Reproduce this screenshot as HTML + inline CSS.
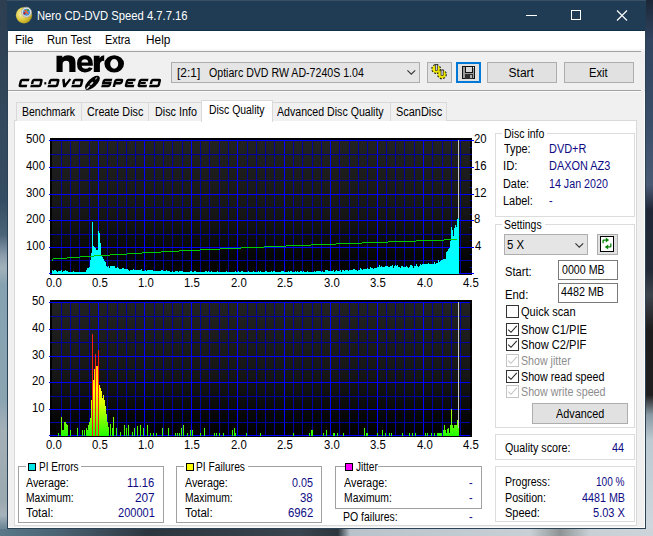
<!DOCTYPE html>
<html><head><meta charset="utf-8">
<style>
html,body{margin:0;padding:0}
*{box-sizing:border-box}
body{width:653px;height:536px;overflow:hidden;position:relative;font-family:"Liberation Sans",sans-serif;
background:linear-gradient(180deg,#27384a 0%,#3d5566 25%,#6f8c9c 45%,#8ea5b1 70%,#9fb2bc 88%,#2a3440 100%)}
.a{position:absolute}
.t{position:absolute;white-space:pre;line-height:1;transform-origin:0 0}
</style></head><body>
<div class="a" style="left:0;top:0;width:7px;height:536px;background:linear-gradient(180deg,#2c3e50 0px,#33485c 120px,#354d62 200px,#4c6478 235px,#8a9cac 255px,#a2b2bc 268px,#86a2b0 285px,#8aa4b2 400px,#a4b0b8 430px,#9aa8b0 500px,#a8b4bc 515px,#7890a0 525px,#5a7888 536px)"></div>
<div class="a" style="left:646px;top:0;width:7px;height:536px;background:linear-gradient(180deg,#1c2838 0px,#30435f 40px,#394d69 120px,#4a5a74 185px,#1f2636 210px,#232a36 270px,#3e444c 295px,#1e1c1c 330px,#201e1e 395px,#8a9aa4 415px,#bccad2 440px,#d0d8de 536px)"></div>
<div class="a" style="left:0;top:529px;width:653px;height:7px;background:linear-gradient(90deg,#5a7888 0px,#4a6272 60px,#2d353e 150px,#3a444e 300px,#2c343c 338px,#b9c2ca 350px,#c8d0d6 530px,#8e9494 560px,#c8d0d6 590px,#cdd4da 653px)"></div>
<div class="a" style="left:7px;top:0px;width:639px;height:529px;background:#f0f0f0"></div>
<div class="a" style="left:7px;top:0px;width:639px;height:30px;background:#203c55;border-top:1px solid #3a5064"></div>
<div class="a" style="left:8px;top:30px;width:637px;height:1px;background:#10304a"></div>
<div class="a" style="left:8px;top:31px;width:637px;height:18px;background:#fff"></div>
<div class="a" style="left:8px;top:49px;width:637px;height:2px;background:#f7f7f7"></div>
<div class="a" style="left:8px;top:51px;width:633px;height:1px;background:#a0a0a0"></div>
<div class="a" style="left:8px;top:90px;width:633px;height:1px;background:#a0a0a0"></div>
<div class="a" style="left:8px;top:91px;width:633px;height:1px;background:#fbfbfb"></div>
<div class="a" style="left:7px;top:30px;width:1px;height:499px;background:#2b4256"></div>
<div class="a" style="left:645px;top:30px;width:1px;height:499px;background:#2b4256"></div>
<div class="a" style="left:7px;top:528px;width:639px;height:1px;background:#2b4256"></div>
<div class="a" style="left:8px;top:527px;width:637px;height:1px;background:#fbfbfb"></div>
<div class="a" style="left:644px;top:92px;width:1px;height:436px;background:#fbfbfb"></div>
<svg class="a" style="left:15px;top:6px" width="18" height="18" viewBox="0 0 18 18">
   <defs><radialGradient id="dg" cx="0.35" cy="0.4" r="0.75"><stop offset="0" stop-color="#f6f0b0"/><stop offset="0.55" stop-color="#dcc63a"/><stop offset="1" stop-color="#a48c10"/></radialGradient></defs>
   <circle cx="9" cy="9.3" r="8.1" fill="url(#dg)"/>
   <circle cx="11.5" cy="6.2" r="5" fill="#e6e6e6" stroke="#a0a0a0" stroke-width="0.8"/>
   <circle cx="11.5" cy="6.2" r="3.5" fill="#3d8fd6"/>
   <path d="M9.5 3.8 L13.2 8 M12.8 3.6 L10.2 7.2" stroke="#f06030" stroke-width="1.2"/>
   <circle cx="9.4" cy="7.4" r="1.1" fill="#b01818"/><circle cx="13" cy="4" r="0.9" fill="#30a030"/>
  </svg>
<div class="a" style="left:526px;top:15px;width:11px;height:1px;background:#fff"></div>
<div class="a" style="left:571px;top:10px;width:10px;height:10px;border:1px solid #fff"></div>
<svg class="a" style="left:616px;top:10px" width="12" height="11" viewBox="0 0 12 11"><path d="M1 0.5 L11 10.5 M11 0.5 L1 10.5" stroke="#fff" stroke-width="1.1"/></svg>
<svg class="a" style="left:0;top:0" width="653" height="100" viewBox="0 0 653 100"><g fill="none" stroke="#000" stroke-width="2.5" stroke-linecap="butt"><path transform="translate(18.3,79) translate(0,8) skewX(-14) translate(0,-8)" d="M9.2,1.1 H2.1 Q1.1,1.1 1.1,2.1 V5.9 Q1.1,6.9 2.1,6.9 H8.399999999999999"/><path transform="translate(30.2,79) translate(0,8) skewX(-14) translate(0,-8)" d="M1.1,5.0 V2.0 Q1.1,1.1 2.0,1.1 H8.700000000000001 Q9.700000000000001,1.1 9.700000000000001,2.1 V5.9 Q9.700000000000001,6.9 8.700000000000001,6.9 H0"/><path transform="translate(47.5,79) translate(0,8) skewX(-14) translate(0,-8)" d="M1.1,5.0 V2.0 Q1.1,1.1 2.0,1.1 H8.200000000000001 Q9.200000000000001,1.1 9.200000000000001,2.1 V5.9 Q9.200000000000001,6.9 8.200000000000001,6.9 H0"/><path transform="translate(60.4,79) translate(0,8) skewX(-14) translate(0,-8)" d="M1.0,0 L3.6,6.9 H4.300000000000001 L7.9,0"/><path transform="translate(71.3,79) translate(0,8) skewX(-14) translate(0,-8)" d="M1.1,5.0 V2.0 Q1.1,1.1 2.0,1.1 H8.200000000000001 Q9.200000000000001,1.1 9.200000000000001,2.1 V5.9 Q9.200000000000001,6.9 8.200000000000001,6.9 H0"/><path transform="translate(101.2,79) translate(0,8) skewX(-14) translate(0,-8)" d="M9.1,1.1 H2.0 Q1.1,1.1 1.1,2.0 V4.0 H8.0 V6.0 Q8.0,6.9 7.1,6.9 H0"/><path transform="translate(112.7,79) translate(0,8) skewX(-14) translate(0,-8)" d="M1.1,8 V2.0 Q1.1,1.1 2.0,1.1 H6.800000000000001 Q7.700000000000001,1.1 7.700000000000001,2.0 V3.3000000000000003 Q7.700000000000001,4.2 6.800000000000001,4.2 H2.1"/><path transform="translate(124.5,79) translate(0,8) skewX(-14) translate(0,-8)" d="M9.3,1.1 H2.0 Q1.1,1.1 1.1,2.0 V6.0 Q1.1,6.9 2.0,6.9 H9.3"/><path transform="translate(137.3,79) translate(0,8) skewX(-14) translate(0,-8)" d="M9.2,1.1 H2.0 Q1.1,1.1 1.1,2.0 V6.0 Q1.1,6.9 2.0,6.9 H9.2"/><path transform="translate(149,79) translate(0,8) skewX(-14) translate(0,-8)" d="M1.1,5.0 V2.0 Q1.1,1.1 2.0,1.1 H8.200000000000001 Q9.200000000000001,1.1 9.200000000000001,2.1 V5.9 Q9.200000000000001,6.9 8.200000000000001,6.9 H0"/></g><g fill="none" stroke="#000" stroke-width="1.8"><path transform="translate(124.5,79) translate(0,8) skewX(-14) translate(0,-8)" d="M2.1,4.0 H7.500000000000001"/><path transform="translate(137.3,79) translate(0,8) skewX(-14) translate(0,-8)" d="M2.1,4.0 H7.3999999999999995"/></g><rect x="44.3" y="82.2" width="2" height="2.2" fill="#000"/><g transform="translate(92.4,82.8) rotate(-43)"><ellipse cx="0" cy="0" rx="9.4" ry="4.3" fill="#000"/><path d="M-8.2,0.4 L-4,0.2" stroke="#e8e8e8" stroke-width="1.3"/><path d="M-3,0.1 L0.8,-0.1" stroke="#d8d8d8" stroke-width="1.8"/><path d="M4.5,-0.6 L7.2,-0.8" stroke="#a0a0a0" stroke-width="1.2"/></g><g fill="#000" fill-rule="evenodd"><path d="M56.5,72 V55.8 H62.3 V57.6 Q64.3,55.3 68.2,55.3 Q75.5,55.3 75.5,62.2 V72 H69.3 V64 Q69.3,60.7 66.1,60.7 Q62.6,60.7 62.6,64.3 V72 Z"/><path d="M92.8,65.8 H81.6 Q82.2,68.7 85.6,68.7 Q88,68.7 89.1,67.2 L92.6,68.3 Q90.6,72.4 85,72.4 Q77,72.4 77,63.8 Q77,55.3 85,55.3 Q92.8,55.3 92.8,63.8 Z M81.4,62.4 H88.3 Q87.9,59.3 84.9,59.3 Q81.9,59.3 81.4,62.4 Z"/><path d="M93.8,72 V55.8 H99.6 V57.9 Q101.2,55.3 104.2,55.3 V60.7 Q99.9,60.7 99.9,64.6 V72 Z"/><path d="M104.4,63.85 A9.8,8.55 0 1,0 124,63.85 A9.8,8.55 0 1,0 104.4,63.85 Z M110.2,63.85 A4,4.9 0 1,0 118.2,63.85 A4,4.9 0 1,0 110.2,63.85 Z"/></g></svg>
<div class="a" style="left:171px;top:62px;width:249px;height:21px;background:#e5e5e5;border:1px solid #adadad"></div>
<svg class="a" style="left:406.5px;top:70.3px" width="9" height="5" viewBox="0 0 9 5"><path d="M0.4 0.4 L4.3 4.2 L8.2 0.4" fill="none" stroke="#333" stroke-width="1.1"/></svg>
<div class="a" style="left:427px;top:62px;width:25px;height:21px;background:#e1e1e1;border:1px solid #adadad"></div>
<svg class="a" style="left:0;top:0" width="653" height="100" viewBox="0 0 653 100">
  <g stroke="#000" stroke-width="1.1" fill="#f2ea00">
   <circle cx="436.2" cy="69" r="3.6" stroke-dasharray="1.6 1.2" stroke-width="2.6"/>
   <circle cx="436.2" cy="69" r="3.4" stroke="none"/>
   <circle cx="441.9" cy="74.3" r="3.6" stroke-dasharray="1.6 1.2" stroke-width="2.6"/>
   <circle cx="441.9" cy="74.3" r="3.4" stroke="none"/>
  </g>
  <g fill="#f2ea00"><circle cx="436.2" cy="69" r="4.3" opacity="0.55"/><circle cx="441.9" cy="74.3" r="4.3" opacity="0.55"/></g>
  <rect x="435.3" y="64.5" width="2.2" height="6" fill="#c8c8d8" stroke="#111" stroke-width="0.6"/>
  <rect x="441" y="70" width="2.2" height="5.5" fill="#c8c8d8" stroke="#111" stroke-width="0.6"/>
 </svg>
<div class="a" style="left:456px;top:62px;width:25px;height:21px;background:#e1e1e1;border:2px solid #0078d7"></div>
<svg class="a" style="left:0;top:0" width="653" height="100" viewBox="0 0 653 100" shape-rendering="crispEdges">
  <rect x="462" y="66" width="13" height="13" fill="#111"/>
  <rect x="463" y="67" width="11" height="11" fill="#9c9c9c"/>
  <rect x="465" y="66" width="8" height="7" fill="#111"/>
  <rect x="466" y="67" width="6" height="5" fill="#d6d6d6"/>
  <rect x="465" y="74" width="8" height="5" fill="#2e2e2e"/>
  <rect x="470" y="75" width="2" height="3" fill="#b0b0b0"/>
  <rect x="473" y="67" width="1" height="1" fill="#fff"/>
 </svg>
<div class="a" style="left:487px;top:62px;width:70px;height:21px;background:#e1e1e1;border:1px solid #adadad"></div>
<div class="a" style="left:564px;top:62px;width:70px;height:21px;background:#e1e1e1;border:1px solid #adadad"></div>
<div class="a" style="left:14px;top:120px;width:623px;height:406px;background:#fff;border:1px solid #d9d9d9"></div>
<div class="a" style="left:16px;top:102px;width:66px;height:19px;background:#f0f0f0;border:1px solid #d9d9d9;border-bottom:none"></div>
<div class="a" style="left:81px;top:102px;width:68px;height:19px;background:#f0f0f0;border:1px solid #d9d9d9;border-bottom:none"></div>
<div class="a" style="left:148px;top:102px;width:54px;height:19px;background:#f0f0f0;border:1px solid #d9d9d9;border-bottom:none"></div>
<div class="a" style="left:272px;top:102px;width:119px;height:19px;background:#f0f0f0;border:1px solid #d9d9d9;border-bottom:none"></div>
<div class="a" style="left:390px;top:102px;width:57px;height:19px;background:#f0f0f0;border:1px solid #d9d9d9;border-bottom:none"></div>
<div class="a" style="left:201px;top:100px;width:72px;height:22px;background:#fff;border:1px solid #d9d9d9;border-bottom:none"></div>
<svg class="a" style="left:0;top:0" width="653" height="536" viewBox="0 0 653 536"><defs><linearGradient id="bg" x1="0" y1="0" x2="0" y2="1"><stop offset="0" stop-color="#222222"/><stop offset="0.55" stop-color="#161616"/><stop offset="1" stop-color="#000000"/></linearGradient><linearGradient id="hot" gradientUnits="userSpaceOnUse" x1="0" y1="436" x2="0" y2="334"><stop offset="0" stop-color="#20ff00"/><stop offset="0.16" stop-color="#80ff00"/><stop offset="0.31" stop-color="#d0ff00"/><stop offset="0.45" stop-color="#ffff00"/><stop offset="0.69" stop-color="#ffc000"/><stop offset="0.82" stop-color="#ff7000"/><stop offset="1" stop-color="#ff1000"/></linearGradient></defs>
<g shape-rendering="crispEdges">
<rect x="50" y="138" width="422" height="137" fill="#000"/>
<rect x="52" y="140" width="418" height="133" fill="url(#bg)"/>
<rect x="61" y="140" width="1" height="134" fill="#0000a0"/>
<rect x="70" y="140" width="1" height="134" fill="#0000a0"/>
<rect x="79" y="140" width="1" height="134" fill="#0000a0"/>
<rect x="89" y="140" width="1" height="134" fill="#0000a0"/>
<rect x="98" y="140" width="1" height="134" fill="#0000ff"/>
<rect x="107" y="140" width="1" height="134" fill="#0000a0"/>
<rect x="117" y="140" width="1" height="134" fill="#0000a0"/>
<rect x="126" y="140" width="1" height="134" fill="#0000a0"/>
<rect x="135" y="140" width="1" height="134" fill="#0000a0"/>
<rect x="144" y="140" width="1" height="134" fill="#0000ff"/>
<rect x="154" y="140" width="1" height="134" fill="#0000a0"/>
<rect x="163" y="140" width="1" height="134" fill="#0000a0"/>
<rect x="172" y="140" width="1" height="134" fill="#0000a0"/>
<rect x="182" y="140" width="1" height="134" fill="#0000a0"/>
<rect x="191" y="140" width="1" height="134" fill="#0000ff"/>
<rect x="200" y="140" width="1" height="134" fill="#0000a0"/>
<rect x="209" y="140" width="1" height="134" fill="#0000a0"/>
<rect x="219" y="140" width="1" height="134" fill="#0000a0"/>
<rect x="228" y="140" width="1" height="134" fill="#0000a0"/>
<rect x="237" y="140" width="1" height="134" fill="#0000ff"/>
<rect x="247" y="140" width="1" height="134" fill="#0000a0"/>
<rect x="256" y="140" width="1" height="134" fill="#0000a0"/>
<rect x="265" y="140" width="1" height="134" fill="#0000a0"/>
<rect x="274" y="140" width="1" height="134" fill="#0000a0"/>
<rect x="284" y="140" width="1" height="134" fill="#0000ff"/>
<rect x="293" y="140" width="1" height="134" fill="#0000a0"/>
<rect x="302" y="140" width="1" height="134" fill="#0000a0"/>
<rect x="312" y="140" width="1" height="134" fill="#0000a0"/>
<rect x="321" y="140" width="1" height="134" fill="#0000a0"/>
<rect x="330" y="140" width="1" height="134" fill="#0000ff"/>
<rect x="339" y="140" width="1" height="134" fill="#0000a0"/>
<rect x="349" y="140" width="1" height="134" fill="#0000a0"/>
<rect x="358" y="140" width="1" height="134" fill="#0000a0"/>
<rect x="367" y="140" width="1" height="134" fill="#0000a0"/>
<rect x="377" y="140" width="1" height="134" fill="#0000ff"/>
<rect x="386" y="140" width="1" height="134" fill="#0000a0"/>
<rect x="395" y="140" width="1" height="134" fill="#0000a0"/>
<rect x="404" y="140" width="1" height="134" fill="#0000a0"/>
<rect x="414" y="140" width="1" height="134" fill="#0000a0"/>
<rect x="423" y="140" width="1" height="134" fill="#0000ff"/>
<rect x="432" y="140" width="1" height="134" fill="#0000a0"/>
<rect x="442" y="140" width="1" height="134" fill="#0000a0"/>
<rect x="451" y="140" width="1" height="134" fill="#0000a0"/>
<rect x="460" y="140" width="1" height="134" fill="#0000a0"/>
<rect x="49" y="273" width="425" height="1" fill="#0000ff"/>
<rect x="50" y="260" width="422" height="1" fill="#0000a0"/>
<rect x="49" y="247" width="425" height="1" fill="#0000ff"/>
<rect x="50" y="234" width="422" height="1" fill="#0000a0"/>
<rect x="49" y="220" width="425" height="1" fill="#0000ff"/>
<rect x="50" y="207" width="422" height="1" fill="#0000a0"/>
<rect x="49" y="194" width="425" height="1" fill="#0000ff"/>
<rect x="50" y="180" width="422" height="1" fill="#0000a0"/>
<rect x="49" y="167" width="425" height="1" fill="#0000ff"/>
<rect x="50" y="154" width="422" height="1" fill="#0000a0"/>
<rect x="49" y="140" width="425" height="1" fill="#0000ff"/>
<rect x="470" y="267" width="2" height="1" fill="#0000a0"/>
<rect x="470" y="254" width="2" height="1" fill="#0000a0"/>
<rect x="470" y="240" width="2" height="1" fill="#0000a0"/>
<rect x="470" y="227" width="2" height="1" fill="#0000a0"/>
<rect x="470" y="214" width="2" height="1" fill="#0000a0"/>
<rect x="470" y="200" width="2" height="1" fill="#0000a0"/>
<rect x="470" y="187" width="2" height="1" fill="#0000a0"/>
<rect x="470" y="174" width="2" height="1" fill="#0000a0"/>
<rect x="470" y="160" width="2" height="1" fill="#0000a0"/>
<rect x="470" y="147" width="2" height="1" fill="#0000a0"/>
<rect x="458" y="140" width="1" height="134" fill="#c8c8c8"/>
<rect x="52" y="270" width="1" height="4" fill="#00ffff"/>
<rect x="53" y="271" width="1" height="3" fill="#00ffff"/>
<rect x="54" y="270" width="1" height="4" fill="#00ffff"/>
<rect x="55" y="270" width="1" height="4" fill="#00ffff"/>
<rect x="56" y="271" width="1" height="3" fill="#00ffff"/>
<rect x="57" y="272" width="1" height="2" fill="#00ffff"/>
<rect x="58" y="271" width="1" height="3" fill="#00ffff"/>
<rect x="59" y="271" width="1" height="3" fill="#00ffff"/>
<rect x="60" y="271" width="1" height="3" fill="#00ffff"/>
<rect x="61" y="270" width="1" height="4" fill="#00ffff"/>
<rect x="62" y="272" width="1" height="2" fill="#00ffff"/>
<rect x="63" y="271" width="1" height="3" fill="#00ffff"/>
<rect x="64" y="271" width="1" height="3" fill="#00ffff"/>
<rect x="65" y="270" width="1" height="4" fill="#00ffff"/>
<rect x="66" y="271" width="1" height="3" fill="#00ffff"/>
<rect x="67" y="271" width="1" height="3" fill="#00ffff"/>
<rect x="68" y="272" width="1" height="2" fill="#00ffff"/>
<rect x="69" y="272" width="1" height="2" fill="#00ffff"/>
<rect x="70" y="272" width="1" height="2" fill="#00ffff"/>
<rect x="71" y="272" width="1" height="2" fill="#00ffff"/>
<rect x="72" y="272" width="1" height="2" fill="#00ffff"/>
<rect x="73" y="271" width="1" height="3" fill="#00ffff"/>
<rect x="74" y="272" width="1" height="2" fill="#00ffff"/>
<rect x="75" y="272" width="1" height="2" fill="#00ffff"/>
<rect x="76" y="272" width="1" height="2" fill="#00ffff"/>
<rect x="77" y="272" width="1" height="2" fill="#00ffff"/>
<rect x="78" y="272" width="1" height="2" fill="#00ffff"/>
<rect x="79" y="272" width="1" height="2" fill="#00ffff"/>
<rect x="80" y="272" width="1" height="2" fill="#00ffff"/>
<rect x="81" y="272" width="1" height="2" fill="#00ffff"/>
<rect x="82" y="272" width="1" height="2" fill="#00ffff"/>
<rect x="83" y="272" width="1" height="2" fill="#00ffff"/>
<rect x="84" y="272" width="1" height="2" fill="#00ffff"/>
<rect x="85" y="272" width="1" height="2" fill="#00ffff"/>
<rect x="86" y="270" width="1" height="4" fill="#00ffff"/>
<rect x="87" y="268" width="1" height="6" fill="#00ffff"/>
<rect x="88" y="268" width="1" height="6" fill="#00ffff"/>
<rect x="89" y="267" width="1" height="7" fill="#00ffff"/>
<rect x="90" y="260" width="1" height="14" fill="#00ffff"/>
<rect x="91" y="253" width="1" height="21" fill="#00ffff"/>
<rect x="92" y="222" width="1" height="52" fill="#00ffff"/>
<rect x="93" y="246" width="1" height="28" fill="#00ffff"/>
<rect x="94" y="247" width="1" height="27" fill="#00ffff"/>
<rect x="95" y="248" width="1" height="26" fill="#00ffff"/>
<rect x="96" y="250" width="1" height="24" fill="#00ffff"/>
<rect x="97" y="250" width="1" height="24" fill="#00ffff"/>
<rect x="98" y="231" width="1" height="43" fill="#00ffff"/>
<rect x="99" y="233" width="1" height="41" fill="#00ffff"/>
<rect x="100" y="243" width="1" height="31" fill="#00ffff"/>
<rect x="101" y="255" width="1" height="19" fill="#00ffff"/>
<rect x="102" y="257" width="1" height="17" fill="#00ffff"/>
<rect x="103" y="259" width="1" height="15" fill="#00ffff"/>
<rect x="104" y="261" width="1" height="13" fill="#00ffff"/>
<rect x="105" y="262" width="1" height="12" fill="#00ffff"/>
<rect x="106" y="266" width="1" height="8" fill="#00ffff"/>
<rect x="107" y="267" width="1" height="7" fill="#00ffff"/>
<rect x="108" y="266" width="1" height="8" fill="#00ffff"/>
<rect x="109" y="268" width="1" height="6" fill="#00ffff"/>
<rect x="110" y="266" width="1" height="8" fill="#00ffff"/>
<rect x="111" y="266" width="1" height="8" fill="#00ffff"/>
<rect x="112" y="266" width="1" height="8" fill="#00ffff"/>
<rect x="113" y="266" width="1" height="8" fill="#00ffff"/>
<rect x="114" y="266" width="1" height="8" fill="#00ffff"/>
<rect x="115" y="268" width="1" height="6" fill="#00ffff"/>
<rect x="116" y="268" width="1" height="6" fill="#00ffff"/>
<rect x="117" y="267" width="1" height="7" fill="#00ffff"/>
<rect x="118" y="268" width="1" height="6" fill="#00ffff"/>
<rect x="119" y="269" width="1" height="5" fill="#00ffff"/>
<rect x="120" y="269" width="1" height="5" fill="#00ffff"/>
<rect x="121" y="269" width="1" height="5" fill="#00ffff"/>
<rect x="122" y="268" width="1" height="6" fill="#00ffff"/>
<rect x="123" y="268" width="1" height="6" fill="#00ffff"/>
<rect x="124" y="269" width="1" height="5" fill="#00ffff"/>
<rect x="125" y="269" width="1" height="5" fill="#00ffff"/>
<rect x="126" y="269" width="1" height="5" fill="#00ffff"/>
<rect x="127" y="269" width="1" height="5" fill="#00ffff"/>
<rect x="128" y="270" width="1" height="4" fill="#00ffff"/>
<rect x="129" y="271" width="1" height="3" fill="#00ffff"/>
<rect x="130" y="270" width="1" height="4" fill="#00ffff"/>
<rect x="131" y="270" width="1" height="4" fill="#00ffff"/>
<rect x="132" y="270" width="1" height="4" fill="#00ffff"/>
<rect x="133" y="269" width="1" height="5" fill="#00ffff"/>
<rect x="134" y="270" width="1" height="4" fill="#00ffff"/>
<rect x="135" y="270" width="1" height="4" fill="#00ffff"/>
<rect x="136" y="270" width="1" height="4" fill="#00ffff"/>
<rect x="137" y="270" width="1" height="4" fill="#00ffff"/>
<rect x="138" y="270" width="1" height="4" fill="#00ffff"/>
<rect x="139" y="270" width="1" height="4" fill="#00ffff"/>
<rect x="140" y="270" width="1" height="4" fill="#00ffff"/>
<rect x="141" y="269" width="1" height="5" fill="#00ffff"/>
<rect x="142" y="271" width="1" height="3" fill="#00ffff"/>
<rect x="143" y="271" width="1" height="3" fill="#00ffff"/>
<rect x="144" y="271" width="1" height="3" fill="#00ffff"/>
<rect x="145" y="270" width="1" height="4" fill="#00ffff"/>
<rect x="146" y="271" width="1" height="3" fill="#00ffff"/>
<rect x="147" y="270" width="1" height="4" fill="#00ffff"/>
<rect x="148" y="270" width="1" height="4" fill="#00ffff"/>
<rect x="149" y="270" width="1" height="4" fill="#00ffff"/>
<rect x="150" y="270" width="1" height="4" fill="#00ffff"/>
<rect x="151" y="270" width="1" height="4" fill="#00ffff"/>
<rect x="152" y="270" width="1" height="4" fill="#00ffff"/>
<rect x="153" y="271" width="1" height="3" fill="#00ffff"/>
<rect x="154" y="271" width="1" height="3" fill="#00ffff"/>
<rect x="155" y="271" width="1" height="3" fill="#00ffff"/>
<rect x="156" y="271" width="1" height="3" fill="#00ffff"/>
<rect x="157" y="271" width="1" height="3" fill="#00ffff"/>
<rect x="158" y="271" width="1" height="3" fill="#00ffff"/>
<rect x="159" y="271" width="1" height="3" fill="#00ffff"/>
<rect x="160" y="271" width="1" height="3" fill="#00ffff"/>
<rect x="161" y="270" width="1" height="4" fill="#00ffff"/>
<rect x="162" y="270" width="1" height="4" fill="#00ffff"/>
<rect x="163" y="271" width="1" height="3" fill="#00ffff"/>
<rect x="164" y="271" width="1" height="3" fill="#00ffff"/>
<rect x="165" y="271" width="1" height="3" fill="#00ffff"/>
<rect x="166" y="270" width="1" height="4" fill="#00ffff"/>
<rect x="167" y="271" width="1" height="3" fill="#00ffff"/>
<rect x="168" y="271" width="1" height="3" fill="#00ffff"/>
<rect x="169" y="271" width="1" height="3" fill="#00ffff"/>
<rect x="170" y="272" width="1" height="2" fill="#00ffff"/>
<rect x="171" y="272" width="1" height="2" fill="#00ffff"/>
<rect x="172" y="271" width="1" height="3" fill="#00ffff"/>
<rect x="173" y="272" width="1" height="2" fill="#00ffff"/>
<rect x="174" y="272" width="1" height="2" fill="#00ffff"/>
<rect x="175" y="271" width="1" height="3" fill="#00ffff"/>
<rect x="176" y="271" width="1" height="3" fill="#00ffff"/>
<rect x="177" y="271" width="1" height="3" fill="#00ffff"/>
<rect x="178" y="272" width="1" height="2" fill="#00ffff"/>
<rect x="179" y="271" width="1" height="3" fill="#00ffff"/>
<rect x="180" y="271" width="1" height="3" fill="#00ffff"/>
<rect x="181" y="271" width="1" height="3" fill="#00ffff"/>
<rect x="182" y="271" width="1" height="3" fill="#00ffff"/>
<rect x="183" y="272" width="1" height="2" fill="#00ffff"/>
<rect x="184" y="272" width="1" height="2" fill="#00ffff"/>
<rect x="185" y="272" width="1" height="2" fill="#00ffff"/>
<rect x="186" y="272" width="1" height="2" fill="#00ffff"/>
<rect x="187" y="272" width="1" height="2" fill="#00ffff"/>
<rect x="188" y="272" width="1" height="2" fill="#00ffff"/>
<rect x="189" y="272" width="1" height="2" fill="#00ffff"/>
<rect x="190" y="271" width="1" height="3" fill="#00ffff"/>
<rect x="191" y="271" width="1" height="3" fill="#00ffff"/>
<rect x="192" y="272" width="1" height="2" fill="#00ffff"/>
<rect x="193" y="272" width="1" height="2" fill="#00ffff"/>
<rect x="194" y="271" width="1" height="3" fill="#00ffff"/>
<rect x="195" y="271" width="1" height="3" fill="#00ffff"/>
<rect x="196" y="272" width="1" height="2" fill="#00ffff"/>
<rect x="197" y="272" width="1" height="2" fill="#00ffff"/>
<rect x="198" y="272" width="1" height="2" fill="#00ffff"/>
<rect x="199" y="272" width="1" height="2" fill="#00ffff"/>
<rect x="200" y="272" width="1" height="2" fill="#00ffff"/>
<rect x="201" y="272" width="1" height="2" fill="#00ffff"/>
<rect x="202" y="272" width="1" height="2" fill="#00ffff"/>
<rect x="203" y="272" width="1" height="2" fill="#00ffff"/>
<rect x="204" y="272" width="1" height="2" fill="#00ffff"/>
<rect x="205" y="271" width="1" height="3" fill="#00ffff"/>
<rect x="206" y="271" width="1" height="3" fill="#00ffff"/>
<rect x="207" y="272" width="1" height="2" fill="#00ffff"/>
<rect x="208" y="271" width="1" height="3" fill="#00ffff"/>
<rect x="209" y="272" width="1" height="2" fill="#00ffff"/>
<rect x="210" y="272" width="1" height="2" fill="#00ffff"/>
<rect x="211" y="271" width="1" height="3" fill="#00ffff"/>
<rect x="212" y="272" width="1" height="2" fill="#00ffff"/>
<rect x="213" y="272" width="1" height="2" fill="#00ffff"/>
<rect x="214" y="272" width="1" height="2" fill="#00ffff"/>
<rect x="215" y="272" width="1" height="2" fill="#00ffff"/>
<rect x="216" y="272" width="1" height="2" fill="#00ffff"/>
<rect x="217" y="271" width="1" height="3" fill="#00ffff"/>
<rect x="218" y="272" width="1" height="2" fill="#00ffff"/>
<rect x="219" y="272" width="1" height="2" fill="#00ffff"/>
<rect x="220" y="272" width="1" height="2" fill="#00ffff"/>
<rect x="221" y="272" width="1" height="2" fill="#00ffff"/>
<rect x="222" y="272" width="1" height="2" fill="#00ffff"/>
<rect x="223" y="272" width="1" height="2" fill="#00ffff"/>
<rect x="224" y="272" width="1" height="2" fill="#00ffff"/>
<rect x="225" y="272" width="1" height="2" fill="#00ffff"/>
<rect x="226" y="271" width="1" height="3" fill="#00ffff"/>
<rect x="227" y="272" width="1" height="2" fill="#00ffff"/>
<rect x="228" y="272" width="1" height="2" fill="#00ffff"/>
<rect x="229" y="272" width="1" height="2" fill="#00ffff"/>
<rect x="230" y="272" width="1" height="2" fill="#00ffff"/>
<rect x="231" y="272" width="1" height="2" fill="#00ffff"/>
<rect x="232" y="272" width="1" height="2" fill="#00ffff"/>
<rect x="233" y="272" width="1" height="2" fill="#00ffff"/>
<rect x="234" y="272" width="1" height="2" fill="#00ffff"/>
<rect x="235" y="271" width="1" height="3" fill="#00ffff"/>
<rect x="236" y="272" width="1" height="2" fill="#00ffff"/>
<rect x="237" y="272" width="1" height="2" fill="#00ffff"/>
<rect x="238" y="271" width="1" height="3" fill="#00ffff"/>
<rect x="239" y="272" width="1" height="2" fill="#00ffff"/>
<rect x="240" y="272" width="1" height="2" fill="#00ffff"/>
<rect x="241" y="271" width="1" height="3" fill="#00ffff"/>
<rect x="242" y="271" width="1" height="3" fill="#00ffff"/>
<rect x="243" y="272" width="1" height="2" fill="#00ffff"/>
<rect x="244" y="272" width="1" height="2" fill="#00ffff"/>
<rect x="245" y="272" width="1" height="2" fill="#00ffff"/>
<rect x="246" y="272" width="1" height="2" fill="#00ffff"/>
<rect x="247" y="272" width="1" height="2" fill="#00ffff"/>
<rect x="248" y="271" width="1" height="3" fill="#00ffff"/>
<rect x="249" y="272" width="1" height="2" fill="#00ffff"/>
<rect x="250" y="272" width="1" height="2" fill="#00ffff"/>
<rect x="251" y="272" width="1" height="2" fill="#00ffff"/>
<rect x="252" y="272" width="1" height="2" fill="#00ffff"/>
<rect x="253" y="271" width="1" height="3" fill="#00ffff"/>
<rect x="254" y="272" width="1" height="2" fill="#00ffff"/>
<rect x="255" y="272" width="1" height="2" fill="#00ffff"/>
<rect x="256" y="272" width="1" height="2" fill="#00ffff"/>
<rect x="257" y="272" width="1" height="2" fill="#00ffff"/>
<rect x="258" y="271" width="1" height="3" fill="#00ffff"/>
<rect x="259" y="272" width="1" height="2" fill="#00ffff"/>
<rect x="260" y="271" width="1" height="3" fill="#00ffff"/>
<rect x="261" y="272" width="1" height="2" fill="#00ffff"/>
<rect x="262" y="272" width="1" height="2" fill="#00ffff"/>
<rect x="263" y="272" width="1" height="2" fill="#00ffff"/>
<rect x="264" y="272" width="1" height="2" fill="#00ffff"/>
<rect x="265" y="271" width="1" height="3" fill="#00ffff"/>
<rect x="266" y="271" width="1" height="3" fill="#00ffff"/>
<rect x="267" y="272" width="1" height="2" fill="#00ffff"/>
<rect x="268" y="272" width="1" height="2" fill="#00ffff"/>
<rect x="269" y="272" width="1" height="2" fill="#00ffff"/>
<rect x="270" y="272" width="1" height="2" fill="#00ffff"/>
<rect x="271" y="271" width="1" height="3" fill="#00ffff"/>
<rect x="272" y="272" width="1" height="2" fill="#00ffff"/>
<rect x="273" y="271" width="1" height="3" fill="#00ffff"/>
<rect x="274" y="271" width="1" height="3" fill="#00ffff"/>
<rect x="275" y="272" width="1" height="2" fill="#00ffff"/>
<rect x="276" y="272" width="1" height="2" fill="#00ffff"/>
<rect x="277" y="272" width="1" height="2" fill="#00ffff"/>
<rect x="278" y="272" width="1" height="2" fill="#00ffff"/>
<rect x="279" y="272" width="1" height="2" fill="#00ffff"/>
<rect x="280" y="272" width="1" height="2" fill="#00ffff"/>
<rect x="281" y="271" width="1" height="3" fill="#00ffff"/>
<rect x="282" y="271" width="1" height="3" fill="#00ffff"/>
<rect x="283" y="271" width="1" height="3" fill="#00ffff"/>
<rect x="284" y="272" width="1" height="2" fill="#00ffff"/>
<rect x="285" y="272" width="1" height="2" fill="#00ffff"/>
<rect x="286" y="272" width="1" height="2" fill="#00ffff"/>
<rect x="287" y="272" width="1" height="2" fill="#00ffff"/>
<rect x="288" y="271" width="1" height="3" fill="#00ffff"/>
<rect x="289" y="272" width="1" height="2" fill="#00ffff"/>
<rect x="290" y="271" width="1" height="3" fill="#00ffff"/>
<rect x="291" y="271" width="1" height="3" fill="#00ffff"/>
<rect x="292" y="272" width="1" height="2" fill="#00ffff"/>
<rect x="293" y="272" width="1" height="2" fill="#00ffff"/>
<rect x="294" y="272" width="1" height="2" fill="#00ffff"/>
<rect x="295" y="271" width="1" height="3" fill="#00ffff"/>
<rect x="296" y="272" width="1" height="2" fill="#00ffff"/>
<rect x="297" y="271" width="1" height="3" fill="#00ffff"/>
<rect x="298" y="272" width="1" height="2" fill="#00ffff"/>
<rect x="299" y="272" width="1" height="2" fill="#00ffff"/>
<rect x="300" y="271" width="1" height="3" fill="#00ffff"/>
<rect x="301" y="271" width="1" height="3" fill="#00ffff"/>
<rect x="302" y="272" width="1" height="2" fill="#00ffff"/>
<rect x="303" y="271" width="1" height="3" fill="#00ffff"/>
<rect x="304" y="272" width="1" height="2" fill="#00ffff"/>
<rect x="305" y="272" width="1" height="2" fill="#00ffff"/>
<rect x="306" y="272" width="1" height="2" fill="#00ffff"/>
<rect x="307" y="271" width="1" height="3" fill="#00ffff"/>
<rect x="308" y="272" width="1" height="2" fill="#00ffff"/>
<rect x="309" y="272" width="1" height="2" fill="#00ffff"/>
<rect x="310" y="272" width="1" height="2" fill="#00ffff"/>
<rect x="311" y="272" width="1" height="2" fill="#00ffff"/>
<rect x="312" y="272" width="1" height="2" fill="#00ffff"/>
<rect x="313" y="272" width="1" height="2" fill="#00ffff"/>
<rect x="314" y="271" width="1" height="3" fill="#00ffff"/>
<rect x="315" y="272" width="1" height="2" fill="#00ffff"/>
<rect x="316" y="271" width="1" height="3" fill="#00ffff"/>
<rect x="317" y="271" width="1" height="3" fill="#00ffff"/>
<rect x="318" y="271" width="1" height="3" fill="#00ffff"/>
<rect x="319" y="271" width="1" height="3" fill="#00ffff"/>
<rect x="320" y="271" width="1" height="3" fill="#00ffff"/>
<rect x="321" y="272" width="1" height="2" fill="#00ffff"/>
<rect x="322" y="271" width="1" height="3" fill="#00ffff"/>
<rect x="323" y="272" width="1" height="2" fill="#00ffff"/>
<rect x="324" y="272" width="1" height="2" fill="#00ffff"/>
<rect x="325" y="270" width="1" height="4" fill="#00ffff"/>
<rect x="326" y="270" width="1" height="4" fill="#00ffff"/>
<rect x="327" y="270" width="1" height="4" fill="#00ffff"/>
<rect x="328" y="271" width="1" height="3" fill="#00ffff"/>
<rect x="329" y="271" width="1" height="3" fill="#00ffff"/>
<rect x="330" y="271" width="1" height="3" fill="#00ffff"/>
<rect x="331" y="271" width="1" height="3" fill="#00ffff"/>
<rect x="332" y="271" width="1" height="3" fill="#00ffff"/>
<rect x="333" y="270" width="1" height="4" fill="#00ffff"/>
<rect x="334" y="272" width="1" height="2" fill="#00ffff"/>
<rect x="335" y="271" width="1" height="3" fill="#00ffff"/>
<rect x="336" y="270" width="1" height="4" fill="#00ffff"/>
<rect x="337" y="271" width="1" height="3" fill="#00ffff"/>
<rect x="338" y="271" width="1" height="3" fill="#00ffff"/>
<rect x="339" y="271" width="1" height="3" fill="#00ffff"/>
<rect x="340" y="270" width="1" height="4" fill="#00ffff"/>
<rect x="341" y="272" width="1" height="2" fill="#00ffff"/>
<rect x="342" y="270" width="1" height="4" fill="#00ffff"/>
<rect x="343" y="270" width="1" height="4" fill="#00ffff"/>
<rect x="344" y="271" width="1" height="3" fill="#00ffff"/>
<rect x="345" y="270" width="1" height="4" fill="#00ffff"/>
<rect x="346" y="270" width="1" height="4" fill="#00ffff"/>
<rect x="347" y="270" width="1" height="4" fill="#00ffff"/>
<rect x="348" y="271" width="1" height="3" fill="#00ffff"/>
<rect x="349" y="270" width="1" height="4" fill="#00ffff"/>
<rect x="350" y="270" width="1" height="4" fill="#00ffff"/>
<rect x="351" y="270" width="1" height="4" fill="#00ffff"/>
<rect x="352" y="270" width="1" height="4" fill="#00ffff"/>
<rect x="353" y="269" width="1" height="5" fill="#00ffff"/>
<rect x="354" y="269" width="1" height="5" fill="#00ffff"/>
<rect x="355" y="270" width="1" height="4" fill="#00ffff"/>
<rect x="356" y="270" width="1" height="4" fill="#00ffff"/>
<rect x="357" y="271" width="1" height="3" fill="#00ffff"/>
<rect x="358" y="270" width="1" height="4" fill="#00ffff"/>
<rect x="359" y="270" width="1" height="4" fill="#00ffff"/>
<rect x="360" y="268" width="1" height="6" fill="#00ffff"/>
<rect x="361" y="269" width="1" height="5" fill="#00ffff"/>
<rect x="362" y="270" width="1" height="4" fill="#00ffff"/>
<rect x="363" y="269" width="1" height="5" fill="#00ffff"/>
<rect x="364" y="269" width="1" height="5" fill="#00ffff"/>
<rect x="365" y="269" width="1" height="5" fill="#00ffff"/>
<rect x="366" y="269" width="1" height="5" fill="#00ffff"/>
<rect x="367" y="268" width="1" height="6" fill="#00ffff"/>
<rect x="368" y="269" width="1" height="5" fill="#00ffff"/>
<rect x="369" y="269" width="1" height="5" fill="#00ffff"/>
<rect x="370" y="267" width="1" height="7" fill="#00ffff"/>
<rect x="371" y="268" width="1" height="6" fill="#00ffff"/>
<rect x="372" y="268" width="1" height="6" fill="#00ffff"/>
<rect x="373" y="269" width="1" height="5" fill="#00ffff"/>
<rect x="374" y="268" width="1" height="6" fill="#00ffff"/>
<rect x="375" y="268" width="1" height="6" fill="#00ffff"/>
<rect x="376" y="268" width="1" height="6" fill="#00ffff"/>
<rect x="377" y="267" width="1" height="7" fill="#00ffff"/>
<rect x="378" y="267" width="1" height="7" fill="#00ffff"/>
<rect x="379" y="265" width="1" height="9" fill="#00ffff"/>
<rect x="380" y="267" width="1" height="7" fill="#00ffff"/>
<rect x="381" y="266" width="1" height="8" fill="#00ffff"/>
<rect x="382" y="267" width="1" height="7" fill="#00ffff"/>
<rect x="383" y="267" width="1" height="7" fill="#00ffff"/>
<rect x="384" y="267" width="1" height="7" fill="#00ffff"/>
<rect x="385" y="266" width="1" height="8" fill="#00ffff"/>
<rect x="386" y="266" width="1" height="8" fill="#00ffff"/>
<rect x="387" y="266" width="1" height="8" fill="#00ffff"/>
<rect x="388" y="267" width="1" height="7" fill="#00ffff"/>
<rect x="389" y="267" width="1" height="7" fill="#00ffff"/>
<rect x="390" y="266" width="1" height="8" fill="#00ffff"/>
<rect x="391" y="266" width="1" height="8" fill="#00ffff"/>
<rect x="392" y="265" width="1" height="9" fill="#00ffff"/>
<rect x="393" y="268" width="1" height="6" fill="#00ffff"/>
<rect x="394" y="266" width="1" height="8" fill="#00ffff"/>
<rect x="395" y="265" width="1" height="9" fill="#00ffff"/>
<rect x="396" y="266" width="1" height="8" fill="#00ffff"/>
<rect x="397" y="265" width="1" height="9" fill="#00ffff"/>
<rect x="398" y="267" width="1" height="7" fill="#00ffff"/>
<rect x="399" y="267" width="1" height="7" fill="#00ffff"/>
<rect x="400" y="268" width="1" height="6" fill="#00ffff"/>
<rect x="401" y="266" width="1" height="8" fill="#00ffff"/>
<rect x="402" y="266" width="1" height="8" fill="#00ffff"/>
<rect x="403" y="267" width="1" height="7" fill="#00ffff"/>
<rect x="404" y="267" width="1" height="7" fill="#00ffff"/>
<rect x="405" y="267" width="1" height="7" fill="#00ffff"/>
<rect x="406" y="266" width="1" height="8" fill="#00ffff"/>
<rect x="407" y="267" width="1" height="7" fill="#00ffff"/>
<rect x="408" y="268" width="1" height="6" fill="#00ffff"/>
<rect x="409" y="267" width="1" height="7" fill="#00ffff"/>
<rect x="410" y="265" width="1" height="9" fill="#00ffff"/>
<rect x="411" y="265" width="1" height="9" fill="#00ffff"/>
<rect x="412" y="266" width="1" height="8" fill="#00ffff"/>
<rect x="413" y="268" width="1" height="6" fill="#00ffff"/>
<rect x="414" y="266" width="1" height="8" fill="#00ffff"/>
<rect x="415" y="266" width="1" height="8" fill="#00ffff"/>
<rect x="416" y="264" width="1" height="10" fill="#00ffff"/>
<rect x="417" y="266" width="1" height="8" fill="#00ffff"/>
<rect x="418" y="267" width="1" height="7" fill="#00ffff"/>
<rect x="419" y="266" width="1" height="8" fill="#00ffff"/>
<rect x="420" y="264" width="1" height="10" fill="#00ffff"/>
<rect x="421" y="265" width="1" height="9" fill="#00ffff"/>
<rect x="422" y="264" width="1" height="10" fill="#00ffff"/>
<rect x="423" y="264" width="1" height="10" fill="#00ffff"/>
<rect x="424" y="264" width="1" height="10" fill="#00ffff"/>
<rect x="425" y="264" width="1" height="10" fill="#00ffff"/>
<rect x="426" y="264" width="1" height="10" fill="#00ffff"/>
<rect x="427" y="264" width="1" height="10" fill="#00ffff"/>
<rect x="428" y="263" width="1" height="11" fill="#00ffff"/>
<rect x="429" y="264" width="1" height="10" fill="#00ffff"/>
<rect x="430" y="264" width="1" height="10" fill="#00ffff"/>
<rect x="431" y="264" width="1" height="10" fill="#00ffff"/>
<rect x="432" y="264" width="1" height="10" fill="#00ffff"/>
<rect x="433" y="264" width="1" height="10" fill="#00ffff"/>
<rect x="434" y="262" width="1" height="12" fill="#00ffff"/>
<rect x="435" y="264" width="1" height="10" fill="#00ffff"/>
<rect x="436" y="263" width="1" height="11" fill="#00ffff"/>
<rect x="437" y="263" width="1" height="11" fill="#00ffff"/>
<rect x="438" y="260" width="1" height="14" fill="#00ffff"/>
<rect x="439" y="262" width="1" height="12" fill="#00ffff"/>
<rect x="440" y="261" width="1" height="13" fill="#00ffff"/>
<rect x="441" y="260" width="1" height="14" fill="#00ffff"/>
<rect x="442" y="260" width="1" height="14" fill="#00ffff"/>
<rect x="443" y="259" width="1" height="15" fill="#00ffff"/>
<rect x="444" y="259" width="1" height="15" fill="#00ffff"/>
<rect x="445" y="259" width="1" height="15" fill="#00ffff"/>
<rect x="446" y="252" width="1" height="22" fill="#00ffff"/>
<rect x="447" y="251" width="1" height="23" fill="#00ffff"/>
<rect x="448" y="249" width="1" height="25" fill="#00ffff"/>
<rect x="449" y="248" width="1" height="26" fill="#00ffff"/>
<rect x="450" y="241" width="1" height="33" fill="#00ffff"/>
<rect x="451" y="227" width="1" height="47" fill="#00ffff"/>
<rect x="452" y="230" width="1" height="44" fill="#00ffff"/>
<rect x="453" y="236" width="1" height="38" fill="#00ffff"/>
<rect x="454" y="228" width="1" height="46" fill="#00ffff"/>
<rect x="455" y="225" width="1" height="49" fill="#00ffff"/>
<rect x="456" y="227" width="1" height="47" fill="#00ffff"/>
<rect x="457" y="219" width="1" height="55" fill="#00ffff"/>
<rect x="458" y="218" width="1" height="56" fill="#00ffff"/>
<rect x="52" y="259" width="1" height="1" fill="#00cc00"/>
<rect x="53" y="258" width="14" height="1" fill="#00cc00"/>
<rect x="67" y="257" width="13" height="1" fill="#00cc00"/>
<rect x="80" y="256" width="14" height="1" fill="#00cc00"/>
<rect x="94" y="255" width="16" height="1" fill="#00cc00"/>
<rect x="110" y="254" width="17" height="1" fill="#00cc00"/>
<rect x="127" y="253" width="15" height="1" fill="#00cc00"/>
<rect x="142" y="252" width="19" height="1" fill="#00cc00"/>
<rect x="161" y="251" width="18" height="1" fill="#00cc00"/>
<rect x="179" y="250" width="21" height="1" fill="#00cc00"/>
<rect x="200" y="249" width="20" height="1" fill="#00cc00"/>
<rect x="220" y="248" width="21" height="1" fill="#00cc00"/>
<rect x="241" y="247" width="23" height="1" fill="#00cc00"/>
<rect x="264" y="246" width="22" height="1" fill="#00cc00"/>
<rect x="286" y="245" width="25" height="1" fill="#00cc00"/>
<rect x="311" y="244" width="25" height="1" fill="#00cc00"/>
<rect x="336" y="243" width="26" height="1" fill="#00cc00"/>
<rect x="362" y="242" width="26" height="1" fill="#00cc00"/>
<rect x="388" y="241" width="28" height="1" fill="#00cc00"/>
<rect x="416" y="240" width="28" height="1" fill="#00cc00"/>
<rect x="444" y="239" width="13" height="1" fill="#00cc00"/>
<rect x="52" y="259" width="1" height="2" fill="#00cc00"/>
<rect x="470" y="138" width="2" height="137" fill="#000"/>
<rect x="470" y="273" width="4" height="1" fill="#0000ff"/>
<rect x="470" y="260" width="2" height="1" fill="#0000a0"/>
<rect x="470" y="247" width="4" height="1" fill="#0000ff"/>
<rect x="470" y="234" width="2" height="1" fill="#0000a0"/>
<rect x="470" y="220" width="4" height="1" fill="#0000ff"/>
<rect x="470" y="207" width="2" height="1" fill="#0000a0"/>
<rect x="470" y="194" width="4" height="1" fill="#0000ff"/>
<rect x="470" y="180" width="2" height="1" fill="#0000a0"/>
<rect x="470" y="167" width="4" height="1" fill="#0000ff"/>
<rect x="470" y="154" width="2" height="1" fill="#0000a0"/>
<rect x="470" y="140" width="4" height="1" fill="#0000ff"/>
<rect x="470" y="267" width="2" height="1" fill="#0000a0"/>
<rect x="470" y="254" width="2" height="1" fill="#0000a0"/>
<rect x="470" y="240" width="2" height="1" fill="#0000a0"/>
<rect x="470" y="227" width="2" height="1" fill="#0000a0"/>
<rect x="470" y="214" width="2" height="1" fill="#0000a0"/>
<rect x="470" y="200" width="2" height="1" fill="#0000a0"/>
<rect x="470" y="187" width="2" height="1" fill="#0000a0"/>
<rect x="470" y="174" width="2" height="1" fill="#0000a0"/>
<rect x="470" y="160" width="2" height="1" fill="#0000a0"/>
<rect x="470" y="147" width="2" height="1" fill="#0000a0"/>
<rect x="50" y="274" width="422" height="1" fill="#000"/>
<rect x="49" y="273" width="3" height="1" fill="#0000ff"/>
<rect x="49" y="247" width="3" height="1" fill="#0000ff"/>
<rect x="49" y="220" width="3" height="1" fill="#0000ff"/>
<rect x="49" y="194" width="3" height="1" fill="#0000ff"/>
<rect x="49" y="167" width="3" height="1" fill="#0000ff"/>
<rect x="49" y="140" width="3" height="1" fill="#0000ff"/>
<rect x="50" y="300" width="422" height="137" fill="#000"/>
<rect x="52" y="302" width="418" height="133" fill="url(#bg)"/>
<rect x="61" y="302" width="1" height="134" fill="#0000a0"/>
<rect x="70" y="302" width="1" height="134" fill="#0000a0"/>
<rect x="79" y="302" width="1" height="134" fill="#0000a0"/>
<rect x="89" y="302" width="1" height="134" fill="#0000a0"/>
<rect x="98" y="302" width="1" height="134" fill="#0000ff"/>
<rect x="107" y="302" width="1" height="134" fill="#0000a0"/>
<rect x="117" y="302" width="1" height="134" fill="#0000a0"/>
<rect x="126" y="302" width="1" height="134" fill="#0000a0"/>
<rect x="135" y="302" width="1" height="134" fill="#0000a0"/>
<rect x="144" y="302" width="1" height="134" fill="#0000ff"/>
<rect x="154" y="302" width="1" height="134" fill="#0000a0"/>
<rect x="163" y="302" width="1" height="134" fill="#0000a0"/>
<rect x="172" y="302" width="1" height="134" fill="#0000a0"/>
<rect x="182" y="302" width="1" height="134" fill="#0000a0"/>
<rect x="191" y="302" width="1" height="134" fill="#0000ff"/>
<rect x="200" y="302" width="1" height="134" fill="#0000a0"/>
<rect x="209" y="302" width="1" height="134" fill="#0000a0"/>
<rect x="219" y="302" width="1" height="134" fill="#0000a0"/>
<rect x="228" y="302" width="1" height="134" fill="#0000a0"/>
<rect x="237" y="302" width="1" height="134" fill="#0000ff"/>
<rect x="247" y="302" width="1" height="134" fill="#0000a0"/>
<rect x="256" y="302" width="1" height="134" fill="#0000a0"/>
<rect x="265" y="302" width="1" height="134" fill="#0000a0"/>
<rect x="274" y="302" width="1" height="134" fill="#0000a0"/>
<rect x="284" y="302" width="1" height="134" fill="#0000ff"/>
<rect x="293" y="302" width="1" height="134" fill="#0000a0"/>
<rect x="302" y="302" width="1" height="134" fill="#0000a0"/>
<rect x="312" y="302" width="1" height="134" fill="#0000a0"/>
<rect x="321" y="302" width="1" height="134" fill="#0000a0"/>
<rect x="330" y="302" width="1" height="134" fill="#0000ff"/>
<rect x="339" y="302" width="1" height="134" fill="#0000a0"/>
<rect x="349" y="302" width="1" height="134" fill="#0000a0"/>
<rect x="358" y="302" width="1" height="134" fill="#0000a0"/>
<rect x="367" y="302" width="1" height="134" fill="#0000a0"/>
<rect x="377" y="302" width="1" height="134" fill="#0000ff"/>
<rect x="386" y="302" width="1" height="134" fill="#0000a0"/>
<rect x="395" y="302" width="1" height="134" fill="#0000a0"/>
<rect x="404" y="302" width="1" height="134" fill="#0000a0"/>
<rect x="414" y="302" width="1" height="134" fill="#0000a0"/>
<rect x="423" y="302" width="1" height="134" fill="#0000ff"/>
<rect x="432" y="302" width="1" height="134" fill="#0000a0"/>
<rect x="442" y="302" width="1" height="134" fill="#0000a0"/>
<rect x="451" y="302" width="1" height="134" fill="#0000a0"/>
<rect x="460" y="302" width="1" height="134" fill="#0000a0"/>
<rect x="49" y="435" width="423" height="1" fill="#0000ff"/>
<rect x="50" y="422" width="422" height="1" fill="#0000a0"/>
<rect x="49" y="409" width="423" height="1" fill="#0000ff"/>
<rect x="50" y="396" width="422" height="1" fill="#0000a0"/>
<rect x="49" y="382" width="423" height="1" fill="#0000ff"/>
<rect x="50" y="369" width="422" height="1" fill="#0000a0"/>
<rect x="49" y="356" width="423" height="1" fill="#0000ff"/>
<rect x="50" y="342" width="422" height="1" fill="#0000a0"/>
<rect x="49" y="329" width="423" height="1" fill="#0000ff"/>
<rect x="50" y="316" width="422" height="1" fill="#0000a0"/>
<rect x="49" y="302" width="423" height="1" fill="#0000ff"/>
<rect x="458" y="302" width="1" height="134" fill="#c8c8c8"/>
<rect x="58" y="433" width="1" height="3" fill="url(#hot)"/>
<rect x="61" y="417" width="1" height="19" fill="url(#hot)"/>
<rect x="62" y="430" width="1" height="6" fill="url(#hot)"/>
<rect x="63" y="430" width="1" height="6" fill="url(#hot)"/>
<rect x="64" y="422" width="1" height="14" fill="url(#hot)"/>
<rect x="65" y="422" width="1" height="14" fill="url(#hot)"/>
<rect x="66" y="424" width="1" height="12" fill="url(#hot)"/>
<rect x="67" y="425" width="1" height="11" fill="url(#hot)"/>
<rect x="70" y="430" width="1" height="6" fill="url(#hot)"/>
<rect x="77" y="428" width="1" height="8" fill="url(#hot)"/>
<rect x="82" y="430" width="1" height="6" fill="url(#hot)"/>
<rect x="84" y="430" width="1" height="6" fill="url(#hot)"/>
<rect x="86" y="428" width="1" height="8" fill="url(#hot)"/>
<rect x="87" y="430" width="1" height="6" fill="url(#hot)"/>
<rect x="88" y="425" width="1" height="11" fill="url(#hot)"/>
<rect x="89" y="422" width="1" height="14" fill="url(#hot)"/>
<rect x="90" y="418" width="1" height="18" fill="url(#hot)"/>
<rect x="91" y="400" width="1" height="36" fill="url(#hot)"/>
<rect x="93" y="380" width="1" height="56" fill="url(#hot)"/>
<rect x="94" y="369" width="1" height="67" fill="url(#hot)"/>
<rect x="95" y="372" width="1" height="64" fill="url(#hot)"/>
<rect x="96" y="366" width="1" height="70" fill="url(#hot)"/>
<rect x="97" y="366" width="1" height="70" fill="url(#hot)"/>
<rect x="98" y="378" width="1" height="58" fill="url(#hot)"/>
<rect x="99" y="385" width="1" height="51" fill="url(#hot)"/>
<rect x="100" y="388" width="1" height="48" fill="url(#hot)"/>
<rect x="101" y="391" width="1" height="45" fill="url(#hot)"/>
<rect x="102" y="398" width="1" height="38" fill="url(#hot)"/>
<rect x="103" y="395" width="1" height="41" fill="url(#hot)"/>
<rect x="104" y="400" width="1" height="36" fill="url(#hot)"/>
<rect x="105" y="406" width="1" height="30" fill="url(#hot)"/>
<rect x="106" y="414" width="1" height="22" fill="url(#hot)"/>
<rect x="107" y="422" width="1" height="14" fill="url(#hot)"/>
<rect x="108" y="427" width="1" height="9" fill="url(#hot)"/>
<rect x="110" y="424" width="1" height="12" fill="url(#hot)"/>
<rect x="112" y="428" width="1" height="8" fill="url(#hot)"/>
<rect x="113" y="417" width="1" height="19" fill="url(#hot)"/>
<rect x="116" y="428" width="1" height="8" fill="url(#hot)"/>
<rect x="120" y="432" width="1" height="4" fill="url(#hot)"/>
<rect x="124" y="425" width="1" height="11" fill="url(#hot)"/>
<rect x="126" y="428" width="1" height="8" fill="url(#hot)"/>
<rect x="128" y="425" width="1" height="11" fill="url(#hot)"/>
<rect x="132" y="432" width="1" height="4" fill="url(#hot)"/>
<rect x="134" y="428" width="1" height="8" fill="url(#hot)"/>
<rect x="137" y="426" width="1" height="10" fill="url(#hot)"/>
<rect x="140" y="425" width="1" height="11" fill="url(#hot)"/>
<rect x="143" y="428" width="1" height="8" fill="url(#hot)"/>
<rect x="147" y="425" width="1" height="11" fill="url(#hot)"/>
<rect x="150" y="433" width="1" height="3" fill="url(#hot)"/>
<rect x="153" y="433" width="1" height="3" fill="url(#hot)"/>
<rect x="156" y="433" width="1" height="3" fill="url(#hot)"/>
<rect x="162" y="428" width="1" height="8" fill="url(#hot)"/>
<rect x="168" y="428" width="1" height="8" fill="url(#hot)"/>
<rect x="175" y="433" width="1" height="3" fill="url(#hot)"/>
<rect x="177" y="433" width="1" height="3" fill="url(#hot)"/>
<rect x="179" y="433" width="1" height="3" fill="url(#hot)"/>
<rect x="181" y="428" width="1" height="8" fill="url(#hot)"/>
<rect x="183" y="425" width="1" height="11" fill="url(#hot)"/>
<rect x="187" y="433" width="1" height="3" fill="url(#hot)"/>
<rect x="190" y="430" width="1" height="6" fill="url(#hot)"/>
<rect x="192" y="430" width="1" height="6" fill="url(#hot)"/>
<rect x="200" y="433" width="1" height="3" fill="url(#hot)"/>
<rect x="204" y="428" width="1" height="8" fill="url(#hot)"/>
<rect x="214" y="433" width="1" height="3" fill="url(#hot)"/>
<rect x="216" y="433" width="1" height="3" fill="url(#hot)"/>
<rect x="219" y="433" width="1" height="3" fill="url(#hot)"/>
<rect x="223" y="433" width="1" height="3" fill="url(#hot)"/>
<rect x="232" y="430" width="1" height="6" fill="url(#hot)"/>
<rect x="234" y="428" width="1" height="8" fill="url(#hot)"/>
<rect x="235" y="433" width="1" height="3" fill="url(#hot)"/>
<rect x="246" y="433" width="1" height="3" fill="url(#hot)"/>
<rect x="260" y="433" width="1" height="3" fill="url(#hot)"/>
<rect x="293" y="433" width="1" height="3" fill="url(#hot)"/>
<rect x="309" y="433" width="1" height="3" fill="url(#hot)"/>
<rect x="311" y="430" width="1" height="6" fill="url(#hot)"/>
<rect x="312" y="430" width="1" height="6" fill="url(#hot)"/>
<rect x="323" y="433" width="1" height="3" fill="url(#hot)"/>
<rect x="326" y="430" width="1" height="6" fill="url(#hot)"/>
<rect x="333" y="433" width="1" height="3" fill="url(#hot)"/>
<rect x="334" y="433" width="1" height="3" fill="url(#hot)"/>
<rect x="337" y="433" width="1" height="3" fill="url(#hot)"/>
<rect x="343" y="433" width="1" height="3" fill="url(#hot)"/>
<rect x="364" y="428" width="1" height="8" fill="url(#hot)"/>
<rect x="366" y="433" width="1" height="3" fill="url(#hot)"/>
<rect x="367" y="433" width="1" height="3" fill="url(#hot)"/>
<rect x="377" y="433" width="1" height="3" fill="url(#hot)"/>
<rect x="382" y="430" width="1" height="6" fill="url(#hot)"/>
<rect x="385" y="433" width="1" height="3" fill="url(#hot)"/>
<rect x="389" y="433" width="1" height="3" fill="url(#hot)"/>
<rect x="391" y="433" width="1" height="3" fill="url(#hot)"/>
<rect x="402" y="433" width="1" height="3" fill="url(#hot)"/>
<rect x="409" y="433" width="1" height="3" fill="url(#hot)"/>
<rect x="412" y="433" width="1" height="3" fill="url(#hot)"/>
<rect x="415" y="433" width="1" height="3" fill="url(#hot)"/>
<rect x="425" y="433" width="1" height="3" fill="url(#hot)"/>
<rect x="427" y="433" width="1" height="3" fill="url(#hot)"/>
<rect x="431" y="433" width="1" height="3" fill="url(#hot)"/>
<rect x="434" y="433" width="1" height="3" fill="url(#hot)"/>
<rect x="437" y="433" width="1" height="3" fill="url(#hot)"/>
<rect x="438" y="433" width="1" height="3" fill="url(#hot)"/>
<rect x="439" y="433" width="1" height="3" fill="url(#hot)"/>
<rect x="440" y="433" width="1" height="3" fill="url(#hot)"/>
<rect x="441" y="433" width="1" height="3" fill="url(#hot)"/>
<rect x="443" y="430" width="1" height="6" fill="url(#hot)"/>
<rect x="444" y="425" width="1" height="11" fill="url(#hot)"/>
<rect x="445" y="430" width="1" height="6" fill="url(#hot)"/>
<rect x="446" y="433" width="1" height="3" fill="url(#hot)"/>
<rect x="447" y="429" width="1" height="7" fill="url(#hot)"/>
<rect x="448" y="428" width="1" height="8" fill="url(#hot)"/>
<rect x="449" y="433" width="1" height="3" fill="url(#hot)"/>
<rect x="450" y="425" width="1" height="11" fill="url(#hot)"/>
<rect x="451" y="409" width="1" height="27" fill="url(#hot)"/>
<rect x="452" y="425" width="1" height="11" fill="url(#hot)"/>
<rect x="453" y="428" width="1" height="8" fill="url(#hot)"/>
<rect x="454" y="425" width="1" height="11" fill="url(#hot)"/>
<rect x="455" y="425" width="1" height="11" fill="url(#hot)"/>
<rect x="456" y="425" width="1" height="11" fill="url(#hot)"/>
<rect x="457" y="420" width="1" height="16" fill="url(#hot)"/>
<rect x="458" y="428" width="1" height="8" fill="url(#hot)"/>
<rect x="92" y="334" width="1" height="102" fill="#ff1a1a"/>
<rect x="95" y="354" width="1" height="82" fill="#ff1a1a"/>
<rect x="98" y="350" width="1" height="86" fill="#ff1a1a"/>
<rect x="470" y="300" width="2" height="137" fill="#000"/>
<rect x="50" y="436" width="422" height="1" fill="#000"/>
<rect x="49" y="435" width="3" height="1" fill="#0000ff"/>
<rect x="49" y="409" width="3" height="1" fill="#0000ff"/>
<rect x="49" y="382" width="3" height="1" fill="#0000ff"/>
<rect x="49" y="356" width="3" height="1" fill="#0000ff"/>
<rect x="49" y="329" width="3" height="1" fill="#0000ff"/>
<rect x="49" y="302" width="3" height="1" fill="#0000ff"/>
</g></svg>
<div class="a" style="left:495px;top:133px;width:140px;height:84px;border:1px solid #dcdcdc"></div>
<div class="a" style="left:502px;top:128px;width:45px;height:11px;background:#fff"></div>
<div class="a" style="left:495px;top:224px;width:140px;height:204px;border:1px solid #dcdcdc"></div>
<div class="a" style="left:502px;top:219px;width:43px;height:11px;background:#fff"></div>
<div class="a" style="left:504px;top:234px;width:84px;height:21px;background:#e5e5e5;border:1px solid #adadad"></div>
<svg class="a" style="left:574.8px;top:242.5px" width="9" height="5" viewBox="0 0 9 5"><path d="M0.4 0.4 L4.3 4.2 L8.2 0.4" fill="none" stroke="#333" stroke-width="1.1"/></svg>
<div class="a" style="left:597px;top:234px;width:21px;height:21px;background:#e1e1e1;border:1px solid #adadad"></div>
<div class="a" style="left:600px;top:236px;width:14px;height:16px;background:#fff;border:1px solid #000"></div>
<svg class="a" style="left:600px;top:236px" width="14" height="16" viewBox="0 0 14 16"><path d="M3.1 7.2 V4.6 Q3.1 4.1 3.6 4.1 H6.6" fill="none" stroke="#0a850a" stroke-width="1.3"/><path d="M5.8 1.6 L9.2 4.1 L5.8 6.6 Z" fill="#0a850a"/><path d="M10.8 7.6 V10.3 Q10.8 10.9 10.3 10.9 H7.4" fill="none" stroke="#0a850a" stroke-width="1.3"/><path d="M8.2 8.4 L4.8 10.9 L8.2 13.4 Z" fill="#0a850a"/></svg>
<div class="a" style="left:558px;top:260px;width:60px;height:20px;background:#fff;border:1px solid #7a7a7a"></div>
<div class="a" style="left:558px;top:283px;width:60px;height:20px;background:#fff;border:1px solid #7a7a7a"></div>
<div class="a" style="left:506px;top:305px;width:13px;height:13px;background:#fff;border:1px solid #333"></div>
<div class="a" style="left:506px;top:323px;width:13px;height:13px;background:#fff;border:1px solid #333"></div>
<svg class="a" style="left:506px;top:323px" width="13" height="13" viewBox="0 0 13 13"><path d="M2.2 6.6 L5 9.3 L10.8 2.8" fill="none" stroke="#222" stroke-width="1.05"/></svg>
<div class="a" style="left:506px;top:338px;width:13px;height:13px;background:#fff;border:1px solid #333"></div>
<svg class="a" style="left:506px;top:338px" width="13" height="13" viewBox="0 0 13 13"><path d="M2.2 6.6 L5 9.3 L10.8 2.8" fill="none" stroke="#222" stroke-width="1.05"/></svg>
<div class="a" style="left:506px;top:354px;width:13px;height:13px;background:#fff;border:1px solid #c4c4c4"></div>
<svg class="a" style="left:506px;top:354px" width="13" height="13" viewBox="0 0 13 13"><path d="M2.2 6.6 L5 9.3 L10.8 2.8" fill="none" stroke="#c4c4c4" stroke-width="1.05"/></svg>
<div class="a" style="left:506px;top:370px;width:13px;height:13px;background:#fff;border:1px solid #333"></div>
<svg class="a" style="left:506px;top:370px" width="13" height="13" viewBox="0 0 13 13"><path d="M2.2 6.6 L5 9.3 L10.8 2.8" fill="none" stroke="#222" stroke-width="1.05"/></svg>
<div class="a" style="left:506px;top:385px;width:13px;height:13px;background:#fff;border:1px solid #c4c4c4"></div>
<svg class="a" style="left:506px;top:385px" width="13" height="13" viewBox="0 0 13 13"><path d="M2.2 6.6 L5 9.3 L10.8 2.8" fill="none" stroke="#c4c4c4" stroke-width="1.05"/></svg>
<div class="a" style="left:532px;top:403px;width:96px;height:21px;background:#e1e1e1;border:1px solid #adadad"></div>
<div class="a" style="left:495px;top:434px;width:140px;height:26px;border:1px solid #dcdcdc"></div>
<div class="a" style="left:495px;top:466px;width:140px;height:56px;border:1px solid #dcdcdc"></div>
<div class="a" style="left:18px;top:466px;width:146px;height:57px;border:1px solid #a0a0a0"></div>
<div class="a" style="left:26px;top:460px;width:55px;height:13px;background:#fff"></div>
<div class="a" style="left:28px;top:463px;width:8px;height:8px;background:#00e5e5;border:1px solid #000"></div>
<div class="a" style="left:176px;top:466px;width:146px;height:57px;border:1px solid #a0a0a0"></div>
<div class="a" style="left:184px;top:460px;width:64px;height:13px;background:#fff"></div>
<div class="a" style="left:186px;top:463px;width:8px;height:8px;background:#ffff00;border:1px solid #000"></div>
<div class="a" style="left:335px;top:466px;width:147px;height:43px;border:1px solid #a0a0a0"></div>
<div class="a" style="left:345px;top:460px;width:33px;height:13px;background:#fff"></div>
<div class="a" style="left:345px;top:463px;width:8px;height:8px;background:#ff00ff;border:1px solid #000"></div>
<div class="t" style="left:37.36px;top:9.90px;font-size:12px;color:#fff;transform:scaleX(0.9365)">Nero CD-DVD Speed 4.7.7.16</div>
<div class="t" style="left:14.94px;top:34.40px;font-size:12px;color:#000;transform:scaleX(0.9556)">File</div>
<div class="t" style="left:46.86px;top:34.40px;font-size:12px;color:#000;transform:scaleX(0.9370)">Run Test</div>
<div class="t" style="left:104.99px;top:34.40px;font-size:12px;color:#000;transform:scaleX(0.9074)">Extra</div>
<div class="t" style="left:145.51px;top:34.40px;font-size:12px;color:#000;transform:scaleX(0.9870)">Help</div>
<div class="t" style="left:176.60px;top:67.20px;font-size:12px;color:#000;transform:scaleX(0.9955)">[2:1]</div>
<div class="t" style="left:208.72px;top:67.20px;font-size:12px;color:#000;transform:scaleX(0.8839)">Optiarc DVD RW AD-7240S 1.04</div>
<div class="t" style="left:508.60px;top:67.10px;font-size:12px;color:#000;transform:scaleX(1.0000)">Start</div>
<div class="t" style="left:588.76px;top:67.10px;font-size:12px;color:#000;transform:scaleX(0.9368)">Exit</div>
<div class="t" style="left:21.73px;top:105.90px;font-size:12px;color:#000;transform:scaleX(0.8733)">Benchmark</div>
<div class="t" style="left:86.80px;top:105.60px;font-size:12px;color:#000;transform:scaleX(0.8984)">Create Disc</div>
<div class="t" style="left:154.50px;top:105.60px;font-size:12px;color:#000;transform:scaleX(0.8978)">Disc Info</div>
<div class="t" style="left:208.73px;top:103.60px;font-size:12px;color:#000;transform:scaleX(0.8683)">Disc Quality</div>
<div class="t" style="left:277.20px;top:105.60px;font-size:12px;color:#000;transform:scaleX(0.8835)">Advanced Disc Quality</div>
<div class="t" style="left:396.39px;top:105.60px;font-size:12px;color:#000;transform:scaleX(0.9102)">ScanDisc</div>
<div class="t" style="left:503.52px;top:127.60px;font-size:12px;color:#000;transform:scaleX(0.8778)">Disc info</div>
<div class="t" style="left:504.10px;top:142.60px;font-size:12px;color:#000;transform:scaleX(0.9036)">Type:</div>
<div class="t" style="left:548.89px;top:142.60px;font-size:12px;color:#0e0a84;transform:scaleX(0.9103)">DVD+R</div>
<div class="t" style="left:503.15px;top:159.80px;font-size:12px;color:#000;transform:scaleX(0.9462)">ID:</div>
<div class="t" style="left:548.89px;top:159.80px;font-size:12px;color:#0e0a84;transform:scaleX(0.9091)">DAXON AZ3</div>
<div class="t" style="left:502.89px;top:177.60px;font-size:12px;color:#000;transform:scaleX(0.9074)">Date:</div>
<div class="t" style="left:548.91px;top:177.60px;font-size:12px;color:#0e0a84;transform:scaleX(0.8908)">14 Jan 2020</div>
<div class="t" style="left:502.89px;top:195.30px;font-size:12px;color:#000;transform:scaleX(0.9097)">Label:</div>
<div class="t" style="left:548.60px;top:195.30px;font-size:12px;color:#0e0a84;transform:scaleX(0.9000)">-</div>
<div class="t" style="left:503.83px;top:218.80px;font-size:12px;color:#000;transform:scaleX(0.8667)">Settings</div>
<div class="t" style="left:507.05px;top:239.10px;font-size:12px;color:#000;transform:scaleX(0.9529)">5 X</div>
<div class="t" style="left:505.07px;top:265.90px;font-size:12px;color:#000;transform:scaleX(0.9259)">Start:</div>
<div class="t" style="left:561.60px;top:263.80px;font-size:12px;color:#000;transform:scaleX(0.8872)">0000 MB</div>
<div class="t" style="left:505.06px;top:288.70px;font-size:12px;color:#000;transform:scaleX(0.9435)">End:</div>
<div class="t" style="left:561.20px;top:286.40px;font-size:12px;color:#000;transform:scaleX(0.8957)">4482 MB</div>
<div class="t" style="left:520.98px;top:305.90px;font-size:12px;color:#000;transform:scaleX(0.9207)">Quick scan</div>
<div class="t" style="left:520.98px;top:323.80px;font-size:12px;color:#000;transform:scaleX(0.9243)">Show C1/PIE</div>
<div class="t" style="left:520.98px;top:338.80px;font-size:12px;color:#000;transform:scaleX(0.9232)">Show C2/PIF</div>
<div class="t" style="left:521.01px;top:354.70px;font-size:12px;color:#8d8d8d;transform:scaleX(0.8873)">Show jitter</div>
<div class="t" style="left:521.01px;top:370.60px;font-size:12px;color:#000;transform:scaleX(0.8935)">Show read speed</div>
<div class="t" style="left:521.01px;top:386.00px;font-size:12px;color:#8d8d8d;transform:scaleX(0.8925)">Show write speed</div>
<div class="t" style="left:555.50px;top:408.10px;font-size:12px;color:#000;transform:scaleX(0.9038)">Advanced</div>
<div class="t" style="left:505.01px;top:442.20px;font-size:12px;color:#000;transform:scaleX(0.8930)">Quality score:</div>
<div class="t" style="left:611.70px;top:442.20px;font-size:12px;color:#0e0a84;transform:scaleX(0.9077)">44</div>
<div class="t" style="left:505.42px;top:476.30px;font-size:12px;color:#000;transform:scaleX(0.8776)">Progress:</div>
<div class="t" style="left:595.96px;top:476.30px;font-size:12px;color:#0e0a84;transform:scaleX(0.8394)">100 %</div>
<div class="t" style="left:505.41px;top:491.80px;font-size:12px;color:#000;transform:scaleX(0.8909)">Position:</div>
<div class="t" style="left:582.40px;top:491.80px;font-size:12px;color:#0e0a84;transform:scaleX(0.8957)">4481 MB</div>
<div class="t" style="left:505.38px;top:507.00px;font-size:12px;color:#000;transform:scaleX(0.9167)">Speed:</div>
<div class="t" style="left:593.18px;top:507.00px;font-size:12px;color:#0e0a84;transform:scaleX(0.9212)">5.03 X</div>
<div class="t" style="left:38.97px;top:461.10px;font-size:12px;color:#000;transform:scaleX(0.8348)">PI Errors</div>
<div class="t" style="left:26.00px;top:477.20px;font-size:12px;color:#000;transform:scaleX(0.8957)">Average:</div>
<div class="t" style="left:126.86px;top:477.20px;font-size:12px;color:#0e0a84;transform:scaleX(0.9357)">11.16</div>
<div class="t" style="left:26.14px;top:492.10px;font-size:12px;color:#000;transform:scaleX(0.8623)">Maximum:</div>
<div class="t" style="left:135.32px;top:492.10px;font-size:12px;color:#0e0a84;transform:scaleX(0.9833)">207</div>
<div class="t" style="left:25.80px;top:506.60px;font-size:12px;color:#000;transform:scaleX(0.9536)">Total:</div>
<div class="t" style="left:117.68px;top:506.60px;font-size:12px;color:#0e0a84;transform:scaleX(0.9184)">200001</div>
<div class="t" style="left:196.45px;top:461.10px;font-size:12px;color:#000;transform:scaleX(0.8536)">PI Failures</div>
<div class="t" style="left:185.30px;top:477.20px;font-size:12px;color:#000;transform:scaleX(0.8957)">Average:</div>
<div class="t" style="left:292.20px;top:477.20px;font-size:12px;color:#0e0a84;transform:scaleX(0.8957)">0.05</div>
<div class="t" style="left:185.44px;top:492.10px;font-size:12px;color:#000;transform:scaleX(0.8623)">Maximum:</div>
<div class="t" style="left:300.45px;top:492.10px;font-size:12px;color:#0e0a84;transform:scaleX(0.9500)">38</div>
<div class="t" style="left:184.80px;top:506.60px;font-size:12px;color:#000;transform:scaleX(0.9643)">Total:</div>
<div class="t" style="left:288.26px;top:506.60px;font-size:12px;color:#0e0a84;transform:scaleX(0.9440)">6962</div>
<div class="t" style="left:355.70px;top:461.10px;font-size:12px;color:#000;transform:scaleX(0.8385)">Jitter</div>
<div class="t" style="left:344.20px;top:477.20px;font-size:12px;color:#000;transform:scaleX(0.9043)">Average:</div>
<div class="t" style="left:468.50px;top:477.20px;font-size:12px;color:#0e0a84;transform:scaleX(0.9000)">-</div>
<div class="t" style="left:344.34px;top:491.80px;font-size:12px;color:#000;transform:scaleX(0.8642)">Maximum:</div>
<div class="t" style="left:468.50px;top:491.80px;font-size:12px;color:#0e0a84;transform:scaleX(0.9000)">-</div>
<div class="t" style="left:343.33px;top:510.50px;font-size:12px;color:#000;transform:scaleX(0.8738)">PO failures:</div>
<div class="t" style="left:468.50px;top:510.50px;font-size:12px;color:#0e0a84;transform:scaleX(0.9000)">-</div>
<div class="t" style="left:26.05px;top:133.00px;font-size:12px;color:#000;transform:scaleX(0.9474)">500</div>
<div class="t" style="left:26.05px;top:160.00px;font-size:12px;color:#000;transform:scaleX(0.9474)">400</div>
<div class="t" style="left:26.05px;top:187.00px;font-size:12px;color:#000;transform:scaleX(0.9474)">300</div>
<div class="t" style="left:26.05px;top:213.00px;font-size:12px;color:#000;transform:scaleX(0.9474)">200</div>
<div class="t" style="left:26.05px;top:240.00px;font-size:12px;color:#000;transform:scaleX(0.9474)">100</div>
<div class="t" style="left:474.05px;top:133.00px;font-size:12px;color:#000;transform:scaleX(0.9474)">20</div>
<div class="t" style="left:474.05px;top:160.00px;font-size:12px;color:#000;transform:scaleX(0.9474)">16</div>
<div class="t" style="left:474.05px;top:187.00px;font-size:12px;color:#000;transform:scaleX(0.9474)">12</div>
<div class="t" style="left:474.05px;top:213.00px;font-size:12px;color:#000;transform:scaleX(0.9474)">8</div>
<div class="t" style="left:475.00px;top:240.00px;font-size:12px;color:#000;transform:scaleX(0.9474)">4</div>
<div class="t" style="left:32.48px;top:295.00px;font-size:12px;color:#000;transform:scaleX(0.9474)">50</div>
<div class="t" style="left:32.48px;top:322.00px;font-size:12px;color:#000;transform:scaleX(0.9474)">40</div>
<div class="t" style="left:32.48px;top:349.00px;font-size:12px;color:#000;transform:scaleX(0.9474)">30</div>
<div class="t" style="left:32.48px;top:375.00px;font-size:12px;color:#000;transform:scaleX(0.9474)">20</div>
<div class="t" style="left:32.48px;top:402.00px;font-size:12px;color:#000;transform:scaleX(0.9474)">10</div>
<div class="t" style="left:45.72px;top:277.00px;font-size:12px;color:#000;transform:scaleX(0.9474)">0.0</div>
<div class="t" style="left:45.72px;top:438.80px;font-size:12px;color:#000;transform:scaleX(0.9474)">0.0</div>
<div class="t" style="left:92.12px;top:277.00px;font-size:12px;color:#000;transform:scaleX(0.9474)">0.5</div>
<div class="t" style="left:92.12px;top:438.80px;font-size:12px;color:#000;transform:scaleX(0.9474)">0.5</div>
<div class="t" style="left:138.05px;top:277.00px;font-size:12px;color:#000;transform:scaleX(0.9474)">1.0</div>
<div class="t" style="left:138.05px;top:438.80px;font-size:12px;color:#000;transform:scaleX(0.9474)">1.0</div>
<div class="t" style="left:184.45px;top:277.00px;font-size:12px;color:#000;transform:scaleX(0.9474)">1.5</div>
<div class="t" style="left:184.45px;top:438.80px;font-size:12px;color:#000;transform:scaleX(0.9474)">1.5</div>
<div class="t" style="left:230.85px;top:277.00px;font-size:12px;color:#000;transform:scaleX(0.9474)">2.0</div>
<div class="t" style="left:230.85px;top:438.80px;font-size:12px;color:#000;transform:scaleX(0.9474)">2.0</div>
<div class="t" style="left:277.25px;top:277.00px;font-size:12px;color:#000;transform:scaleX(0.9474)">2.5</div>
<div class="t" style="left:277.25px;top:438.80px;font-size:12px;color:#000;transform:scaleX(0.9474)">2.5</div>
<div class="t" style="left:323.65px;top:277.00px;font-size:12px;color:#000;transform:scaleX(0.9474)">3.0</div>
<div class="t" style="left:323.65px;top:438.80px;font-size:12px;color:#000;transform:scaleX(0.9474)">3.0</div>
<div class="t" style="left:370.05px;top:277.00px;font-size:12px;color:#000;transform:scaleX(0.9474)">3.5</div>
<div class="t" style="left:370.05px;top:438.80px;font-size:12px;color:#000;transform:scaleX(0.9474)">3.5</div>
<div class="t" style="left:416.92px;top:277.00px;font-size:12px;color:#000;transform:scaleX(0.9474)">4.0</div>
<div class="t" style="left:416.92px;top:438.80px;font-size:12px;color:#000;transform:scaleX(0.9474)">4.0</div>
<div class="t" style="left:463.32px;top:277.00px;font-size:12px;color:#000;transform:scaleX(0.9474)">4.5</div>
<div class="t" style="left:463.32px;top:438.80px;font-size:12px;color:#000;transform:scaleX(0.9474)">4.5</div>
</body></html>
